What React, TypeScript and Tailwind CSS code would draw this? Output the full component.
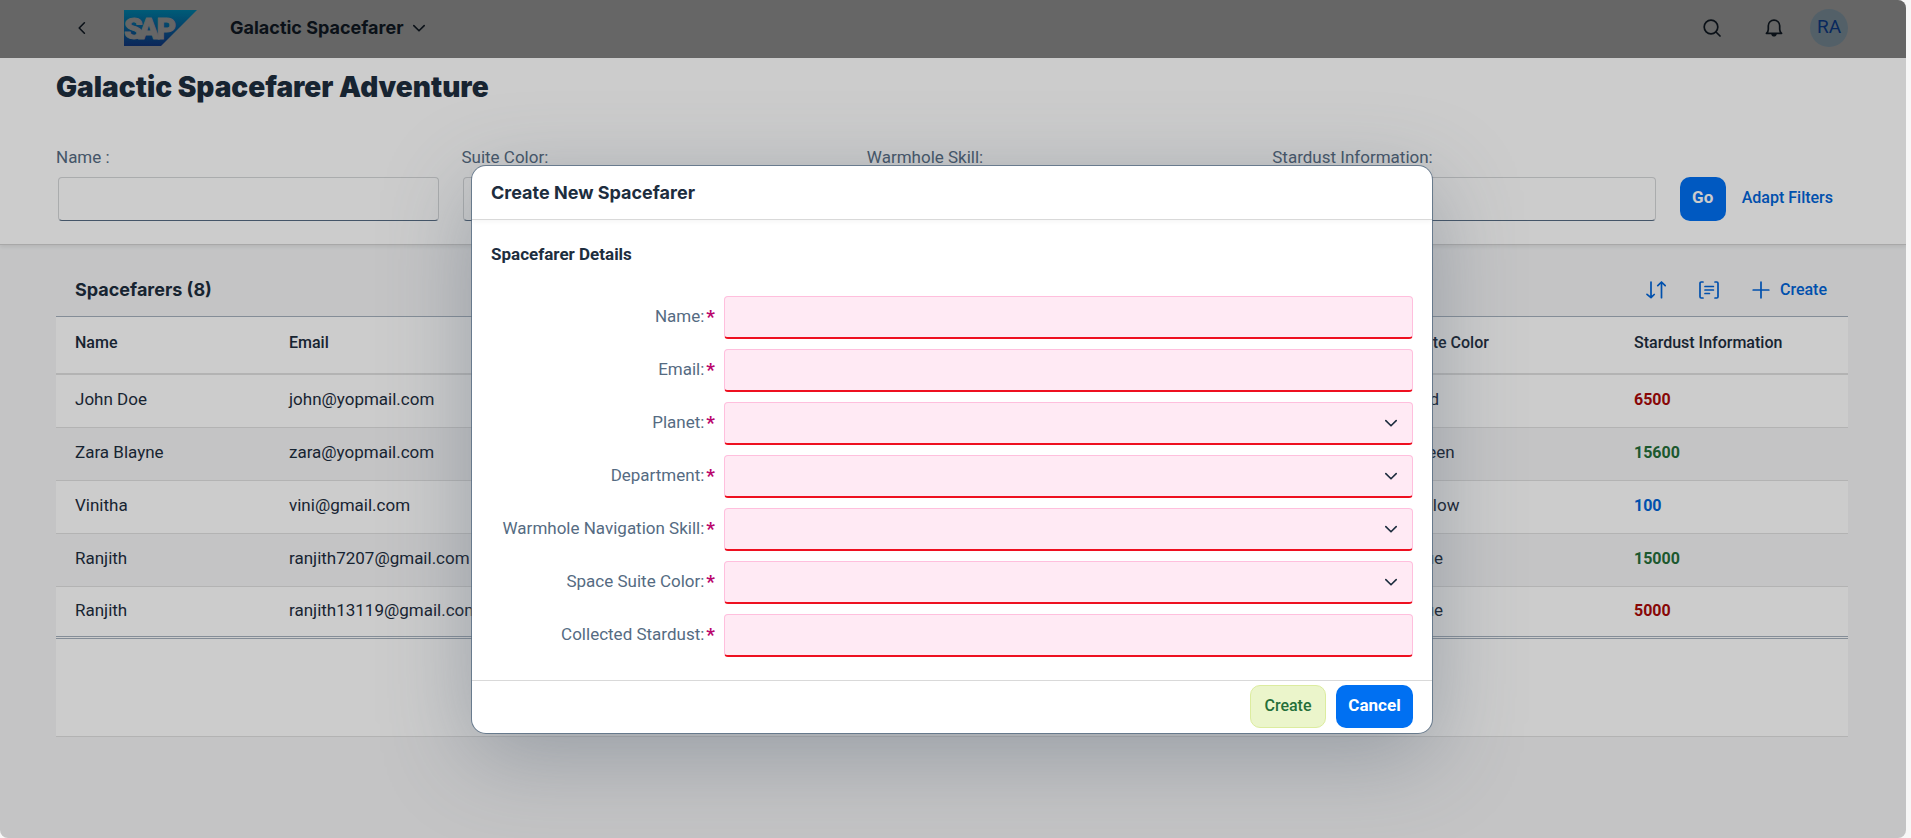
import React from "react";

type IconProps = { className?: string };

function ChevronDown({ className }: IconProps) {
  return (
    <svg viewBox="0 0 16 16" className={className} fill="none" stroke="currentColor" strokeWidth="1.6" strokeLinecap="round" strokeLinejoin="round" aria-hidden="true">
      <path d="M2.800 5.600 8 10.800l5.200-5.200" />
    </svg>
  );
}

function SapLogo() {
  return (
    <svg viewBox="0 0 73 36" className="h-9 w-[73px]" role="img" aria-label="SAP">
      <defs>
        <linearGradient id="sapGradient" x1="0" y1="0" x2="0" y2="1">
          <stop offset="0" stopColor="#007396" />
          <stop offset="0.5" stopColor="#065284" />
          <stop offset="1" stopColor="#0f3170" />
        </linearGradient>
      </defs>
      <path d="M0 0h73L37 36H0z" fill="url(#sapGradient)" />
      <text x="0 14.500 32.500" y="28.500" fill="#808080" stroke="#808080" strokeWidth="1" fontSize="30" fontWeight="900" className="font-['Roboto',sans-serif]">
        SAP
      </text>
    </svg>
  );
}

function SearchIcon() {
  return (
    <svg viewBox="0 0 18 18" className="size-[18px]" fill="none" stroke="currentColor" strokeWidth="1.7" strokeLinecap="round" aria-hidden="true">
      <circle cx="8" cy="8" r="6.800" />
      <path d="m13 13 4 4" />
    </svg>
  );
}

function BellIcon() {
  return (
    <svg viewBox="0 0 18 18" className="size-[18px]" fill="none" stroke="currentColor" strokeWidth="1.7" strokeLinejoin="round" aria-hidden="true">
      <path d="M1.400 14.300c1.300-1 1.900-2.100 1.900-4.100V6.800a5.700 5.700 0 0 1 11.400 0v3.400c0 2 .6 3.100 1.900 4.100z" />
      <path d="M6.200 15h5.600c-.4 1.800-1.400 2.600-2.800 2.600s-2.400-.8-2.800-2.600z" fill="currentColor" stroke="none" />
    </svg>
  );
}

function SortIcon() {
  return (
    <svg viewBox="0 0 20 18" className="h-[18px] w-5" fill="none" stroke="currentColor" strokeWidth="1.700" strokeLinecap="round" strokeLinejoin="round" aria-hidden="true">
      <path d="M5 1v15.500M1 13.300l4 3.400 3.200-3.200M15.500 16.700V1.200M11.800 4.700l3.700-3.700 3.700 3.700" />
    </svg>
  );
}

function GroupIcon() {
  return (
    <svg viewBox="0 0 20 18" className="h-[18px] w-5" fill="none" stroke="currentColor" strokeWidth="1.700" strokeLinecap="round" strokeLinejoin="round" aria-hidden="true">
      <path d="M4 1H2.200Q1 1 1 2.200v13.600Q1 17 2.200 17H4M16 1h1.800Q19 1 19 2.200v13.600q0 1.200-1.200 1.200H16M6 5.500h8.400M6 9h8.400M6 12.500h4.400" />
    </svg>
  );
}

function PlusIcon() {
  return (
    <svg viewBox="0 0 18 18" className="size-[18px]" fill="none" stroke="currentColor" strokeWidth="1.700" strokeLinecap="round" aria-hidden="true">
      <path d="M9 1.200v15.600M1.200 9h15.600" />
    </svg>
  );
}

const filters = [
  { id: "filter-name", label: "Name :" },
  { id: "filter-color", label: "Suite Color:" },
  { id: "filter-skill", label: "Warmhole Skill:" },
  { id: "filter-stardust", label: "Stardust Information:" },
];

const rows = [
  { name: "John Doe", email: "john@yopmail.com", color: "Red", stardust: "6500", tone: "text-[#aa0808]" },
  { name: "Zara Blayne", email: "zara@yopmail.com", color: "Green", stardust: "15600", tone: "text-[#256f3a]" },
  { name: "Vinitha", email: "vini@gmail.com", color: "Yellow", stardust: "100", tone: "text-[#0064d9]" },
  { name: "Ranjith", email: "ranjith7207@gmail.com", color: "Blue", stardust: "15000", tone: "text-[#256f3a]" },
  { name: "Ranjith", email: "ranjith13119@gmail.com", color: "Blue", stardust: "5000", tone: "text-[#aa0808]" },
];

const fields = [
  { id: "new-name", label: "Name:", select: false },
  { id: "new-email", label: "Email:", select: false },
  { id: "new-planet", label: "Planet:", select: true },
  { id: "new-department", label: "Department:", select: true },
  { id: "new-skill", label: "Warmhole Navigation Skill:", select: true },
  { id: "new-color", label: "Space Suite Color:", select: true },
  { id: "new-stardust", label: "Collected Stardust:", select: false },
];

const titleClass = "font-['Inter',sans-serif] text-[18px] font-bold";

const fieldClass =
  "block h-[43px] w-full appearance-none rounded-[4px] border border-[#ffbfdd] border-b-2 border-b-[#ee1020] bg-[#ffeaf4] px-3 outline-none";

function ShellBar() {
  return (
    <header className="flex h-[58px] items-center bg-[#808080] pr-[58px] pb-[3px] pl-[74px] text-[#0e161e]">
      <button type="button" aria-label="Back" className="flex size-4 items-center">
        <ChevronDown className="size-4 rotate-90" />
      </button>
      <a href="#home" className="ml-[34px]">
        <SapLogo />
      </a>
      <button type="button" className={`ml-[33px] flex items-center gap-2 ${titleClass}`}>
        Galactic Spacefarer
        <ChevronDown className="size-4" />
      </button>
      <div className="ml-auto flex items-center">
        <button type="button" aria-label="Search">
          <SearchIcon />
        </button>
        <button type="button" aria-label="Notifications" className="ml-[44px]">
          <BellIcon />
        </button>
        <button type="button" className="ml-[27px] size-[38px] rounded-full bg-[#687983] text-[19px] text-[#0b3275]">
          RA
        </button>
      </div>
    </header>
  );
}

function FilterBar() {
  return (
    <section className="border-b border-[#d3d3d3] bg-white pr-[58px] pl-14 shadow-[0_2px_4px_rgba(0,0,0,0.08)]">
      <h1 className="pt-2.5 font-['Inter',sans-serif] text-[28px] leading-[38px] font-black text-[#1d2d3e]">
        Galactic Spacefarer Adventure
      </h1>
      <div className="flex items-end pt-[39px] pb-[23px]">
        <div className="grid flex-1 grid-cols-4">
          {filters.map((f) => (
            <div key={f.id} className="flex flex-col">
              <label htmlFor={f.id} className="leading-6 text-[#556b82]">
                {f.label}
              </label>
              <div className="pt-2 pr-[22px] pl-0.5">
                <input
                  id={f.id}
                  type="text"
                  className="block h-11 w-full rounded-[4px] border border-[#d5d7d9] border-b-[#556b82] bg-white px-3 outline-none"
                />
              </div>
            </div>
          ))}
        </div>
        <button type="button" className="ml-0.5 h-11 w-[46px] rounded-[10px] bg-[#0070f2] pb-0.5 font-bold text-white">
          Go
        </button>
        <button type="button" className="mr-[15px] ml-4 h-11 pb-0.5 text-base font-medium text-[#0064d9]">
          Adapt Filters
        </button>
      </div>
    </section>
  );
}

function TableSection() {
  return (
    <section className="pt-5 pr-[58px] pl-14">
      <div className="flex h-[51px] items-center justify-between pr-[21px] pb-0.5 pl-[19px]">
        <h2 className={`text-[#1d2d3e] ${titleClass}`}>Spacefarers (8)</h2>
        <div className="flex items-center text-[#0064d9]">
          <button type="button" aria-label="Sort">
            <SortIcon />
          </button>
          <button type="button" aria-label="Group" className="ml-[33px]">
            <GroupIcon />
          </button>
          <button type="button" className="ml-[33px] flex items-center gap-2.5 text-base font-medium">
            <PlusIcon />
            Create
          </button>
        </div>
      </div>
      <div className="bg-white">
        <table className="w-full table-fixed border-separate border-spacing-0 text-left text-[#1d2d3e]">
          <colgroup>
            <col className="w-[214px]" />
            <col className="w-[15%]" />
            <col />
            <col />
            <col />
            <col className="w-[224px]" />
            <col className="w-[233px]" />
          </colgroup>
          <thead>
            <tr className="h-[59px] text-base [&>th]:border-t [&>th]:border-b-2 [&>th]:border-t-[#a5b1bd] [&>th]:border-b-[#e0e0e0] [&>th]:pb-1 [&>th]:pl-[19px] [&>th]:font-medium">
              <th>Name</th>
              <th>Email</th>
              <th>Planet</th>
              <th>Department</th>
              <th>Warmhole Skill</th>
              <th>Suite Color</th>
              <th>Stardust Information</th>
            </tr>
          </thead>
          <tbody>
            {rows.map((r) => (
              <tr
                key={r.email}
                className="h-[53px] even:bg-[#f5f6f7] last:h-[50px] [&>td]:border-b [&>td]:border-[#e0e0e0] [&>td]:pb-0.5 [&>td]:pl-[19px] last:[&>td]:border-[#a5b1bd]"
              >
                <td>{r.name}</td>
                <td className="whitespace-nowrap">{r.email}</td>
                <td />
                <td />
                <td />
                <td>{r.color}</td>
                <td className={`text-base font-bold ${r.tone}`}>{r.stardust}</td>
              </tr>
            ))}
          </tbody>
        </table>
        <div className="pt-px">
          <div className="h-[99px] border-t border-b border-t-[#a5b1bd] border-b-[#e0e0e0]" />
        </div>
      </div>
    </section>
  );
}

function CreateDialog() {
  return (
    <form
      role="dialog"
      aria-labelledby="dialog-title"
      className="w-[960px] rounded-[14px] bg-white text-[#1d2d3e] shadow-[0_0_0_1px_rgba(85,107,130,0.8),0_22px_88px_rgba(75,92,110,0.38)]"
    >
      <h2
        id="dialog-title"
        className={`flex h-[54px] items-center border-b border-[#d9d9d9] px-[19px] shadow-[0_2px_4px_rgba(0,0,0,0.04)] ${titleClass}`}
      >
        Create New Spacefarer
      </h2>
      <div className="px-[19px] pt-[22px] pb-[23px]">
        <h3 className="text-[17px] leading-6 font-bold">Spacefarer Details</h3>
        <div className="flex flex-col gap-2.5 pt-[30px]">
          {fields.map((f) => (
            <div key={f.id} className="flex items-center">
              <label htmlFor={f.id} className="flex w-[224px] items-center justify-end gap-0.5 text-[#556b82]">
                {f.label}
                <span className="text-[19px] font-bold text-[#ba066c]">*</span>
              </label>
              {f.select ? (
                <div className="relative ml-[9px] flex-1">
                  <select id={f.id} className={fieldClass} defaultValue="">
                    <option value="" />
                  </select>
                  <ChevronDown className="pointer-events-none absolute top-[13px] right-[14px] size-4" />
                </div>
              ) : (
                <div className="ml-[9px] flex-1">
                  <input id={f.id} type="text" className={fieldClass} />
                </div>
              )}
            </div>
          ))}
        </div>
      </div>
      <footer className="flex h-[53px] items-center justify-end gap-2.5 border-t border-[#d9d9d9] px-[19px]">
        <button type="button" className="h-[43px] w-[76px] rounded-[10px] border border-[#dcec9f] bg-[#ebf5cb] pb-0.5 text-base font-medium text-[#256f3a]">
          Create
        </button>
        <button type="button" className="h-[43px] w-[77px] rounded-[10px] bg-[#0070f2] pb-0.5 font-bold text-white">
          Cancel
        </button>
      </footer>
    </form>
  );
}

export default function App() {
  return (
    <div className="min-h-screen bg-[#f7f7f7] pr-[5px] font-['Roboto',sans-serif] text-[17px]">
      <div className="relative min-h-screen overflow-hidden rounded-r-[8px] rounded-bl-[8px] bg-[#f5f6f7]">
        <ShellBar />
        <main>
          <FilterBar />
          <TableSection />
        </main>
        <div className="absolute inset-0 flex items-center justify-center bg-black/20 pt-[60px] pr-0.5">
          <CreateDialog />
        </div>
      </div>
    </div>
  );
}
